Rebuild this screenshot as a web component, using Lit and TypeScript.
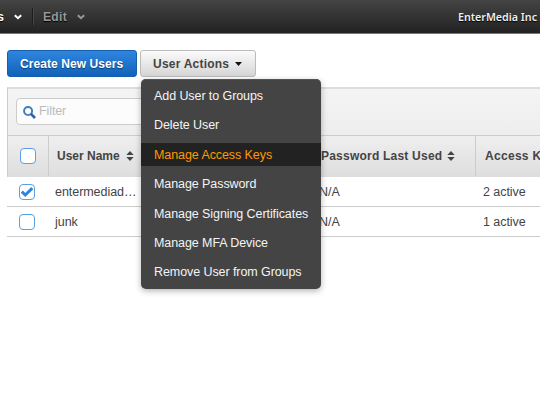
import { LitElement, html, css, svg } from "lit";
import { customElement, property, state } from "lit/decorators.js";
import { classMap } from "lit/directives/class-map.js";

interface User {
  name: string;
  selected: boolean;
  passwordLastUsed: string;
  keys: string;
}

@customElement("check-box")
class CheckBox extends LitElement {
  @property({ type: Boolean }) checked = false;

  static styles = css`
    :host {
      display: block;
      width: 16px;
      height: 16px;
      box-sizing: border-box;
      border: 1px solid #5b9fe4;
      border-radius: 4px;
      background: #fff;
    }
    .tick {
      display: block;
      width: 14px;
      height: 14px;
    }
  `;

  render() {
    return this.checked
      ? html`<svg class="tick" viewBox="0 0 14 14">
          ${svg`<path d="M1.8 6.6 5.3 10 12.3 3.2" fill="none" stroke="#3184de" stroke-width="3"/>`}
        </svg>`
      : html``;
  }
}

@customElement("sort-arrows")
class SortArrows extends LitElement {
  static styles = css`
    :host {
      display: block;
      width: 8px;
      height: 10px;
    }
    svg {
      display: block;
    }
  `;

  render() {
    return html`<svg width="8" height="10" viewBox="0 0 8 10">
      <path d="M4 0 7.7 4H.3zM4 10 .3 6h7.4z" fill="#444" />
    </svg>`;
  }
}

@customElement("app-root")
class AppRoot extends LitElement {
  @state() private active = "Manage Access Keys";

  private actions = [
    "Add User to Groups",
    "Delete User",
    "Manage Access Keys",
    "Manage Password",
    "Manage Signing Certificates",
    "Manage MFA Device",
    "Remove User from Groups",
  ];

  private users: User[] = [
    { name: "entermediad…", selected: true, passwordLastUsed: "N/A", keys: "2 active" },
    { name: "junk", selected: false, passwordLastUsed: "N/A", keys: "1 active" },
  ];

  static styles = css`
    :host {
      display: block;
      width: 540px;
      height: 420px;
      overflow: hidden;
      background: #fff;
      color: #444;
      font: 12.5px/16px "Liberation Sans", Arial, sans-serif;
      white-space: nowrap;
    }
    svg {
      display: block;
      flex: none;
    }
    .nav {
      display: flex;
      align-items: center;
      box-sizing: border-box;
      height: 34px;
      border-bottom: 1px solid #777;
      background: linear-gradient(#444, #222);
      color: #fff;
      font-weight: bold;
      font-size: 12px;
      text-shadow: 0 1px 1px #000;
    }
    .nav-cut {
      display: flex;
      justify-content: flex-end;
      width: 4px;
      margin-right: 10px;
    }
    .divider {
      width: 1px;
      height: 17px;
      margin: 0 9px 0 10px;
      background: #1c1c1c;
      border-right: 1px solid #484848;
    }
    .edit {
      margin-right: 10px;
      color: #999;
      letter-spacing: 0.35px;
    }
    .account {
      margin-left: auto;
      padding-right: 3px;
      font: 600 10.7px/16px "Noto Sans", sans-serif;
      color: #eee;
    }
    .toolbar {
      display: flex;
      gap: 3px;
      padding: 16px 0 0 7px;
    }
    .button {
      display: flex;
      align-items: center;
      box-sizing: border-box;
      height: 27px;
      padding: 0 12px;
      border: 1px solid #bbb;
      border-radius: 3px;
      background: linear-gradient(#fbfbfb, #d5d5d5);
      font-weight: bold;
      font-size: 12px;
    }
    .primary {
      width: 130px;
      border-color: #145fae;
      background: linear-gradient(#2f85df, #1163b8);
      color: #fff;
      letter-spacing: 0.08px;
      text-shadow: 0 1px 1px #0b3c73;
    }
    .actions {
      position: relative;
    }
    .secondary {
      width: 116px;
      gap: 6px;
      letter-spacing: 0.22px;
    }
    .menu {
      position: absolute;
      z-index: 2;
      top: 29px;
      left: 1px;
      box-sizing: border-box;
      width: 180px;
      height: 210px;
      padding: 5px 0 0;
      border-radius: 5px;
      background: #444;
      box-shadow: inset 0 1px #555, 0 2px 6px rgba(0, 0, 0, 0.3);
      color: #f4f4f4;
      letter-spacing: -0.08px;
    }
    .item {
      height: 23px;
      margin-bottom: 6.4px;
      padding-left: 13px;
      line-height: 24px;
    }
    .item.on {
      background: #222;
      color: #f90;
    }
    .panel {
      margin: 10px 0 0 7px;
    }
    .filter-bar {
      box-sizing: border-box;
      height: 48px;
      padding: 9px 0 0 8px;
      border-top: 2px solid #ddd;
      border-left: 1px solid #ccc;
      background: linear-gradient(#f4f4f4, #eee);
    }
    .filter {
      display: flex;
      align-items: center;
      gap: 3px;
      box-sizing: border-box;
      width: 220px;
      height: 27px;
      padding-left: 6px;
      border: 1px solid #ccc;
      border-radius: 4px;
      background: #fcfcfc;
      color: #bbb;
      letter-spacing: -0.1px;
    }
    .filter svg {
      margin-top: 2px;
    }
    .filter span {
      margin-top: -1px;
    }
    .row {
      display: grid;
      grid-template-columns: 41px 264px 163px 1fr;
      align-items: center;
      box-sizing: border-box;
      height: 30px;
      border-bottom: 1px solid #ccc;
      letter-spacing: -0.05px;
    }
    .row check-box {
      margin-left: 12px;
    }
    .cell {
      padding-left: 7px;
    }
    .row .cell.last {
      padding-left: 8px;
    }
    .row.header {
      align-items: stretch;
      grid-template-columns: 40px 264px 163px 1fr;
      height: 42px;
      border-top: 1px solid #ccc;
      border-left: 1px solid #ccc;
      border-bottom-color: #ddd;
      background: linear-gradient(#efefef, #dedede);
      font-weight: bold;
      font-size: 12px;
      letter-spacing: 0;
    }
    .header .cell {
      display: flex;
      align-items: center;
      gap: 6px;
      padding-left: 8px;
      border-left: 1px solid #ccc;
    }
    .header .cell.mid {
      gap: 5px;
      border-left-color: transparent;
      letter-spacing: 0.22px;
    }
    .header .cell.keys {
      padding-left: 9px;
      letter-spacing: 0.3px;
    }
    .header check-box {
      align-self: center;
    }
  `;

  private chevron(color: string) {
    return html`<svg width="8" height="6" viewBox="0 0 8 6">
      <path d="M.8 1.2 4 4.2 7.2 1.2" fill="none" stroke=${color} stroke-width="2" />
    </svg>`;
  }

  render() {
    return html`
      <div class="nav">
        <span class="nav-cut">s</span>${this.chevron("#fff")}
        <span class="divider"></span>
        <span class="edit">Edit</span>${this.chevron("#999")}
        <span class="account">EnterMedia Inc</span>
      </div>
      <div class="toolbar">
        <div class="button primary">Create New Users</div>
        <div class="actions">
          <div class="button secondary">
            <span>User Actions</span>
            <svg width="7" height="4" viewBox="0 0 7 4"><path d="M0 0h7L3.5 4z" fill="#111" /></svg>
          </div>
          <div class="menu">
            ${this.actions.map(
              (a) => html`<div
                class=${classMap({ item: true, on: a === this.active })}
                @mouseenter=${() => (this.active = a)}
              >${a}</div>`
            )}
          </div>
        </div>
      </div>
      <div class="panel">
        <div class="filter-bar">
          <div class="filter">
            <svg width="13" height="13" viewBox="0 0 12 12">
              <circle cx="4.7" cy="4.7" r="3.7" fill="none" stroke="#3d7fbd" stroke-width="1.8" />
              <path d="m7.3 7.3 3.8 3.8" stroke="#34619f" stroke-width="2.4" />
            </svg>
            <span>Filter</span>
          </div>
        </div>
        <div class="row header">
          <check-box></check-box>
          <div class="cell">User Name <sort-arrows></sort-arrows></div>
          <div class="cell mid">Password Last Used <sort-arrows></sort-arrows></div>
          <div class="cell keys">Access Keys</div>
        </div>
        ${this.users.map(
          (u) => html`<div class="row">
            <check-box ?checked=${u.selected}></check-box>
            <div class="cell">${u.name}</div>
            <div class="cell">${u.passwordLastUsed}</div>
            <div class="cell last">${u.keys}</div>
          </div>`
        )}
      </div>
    `;
  }
}
